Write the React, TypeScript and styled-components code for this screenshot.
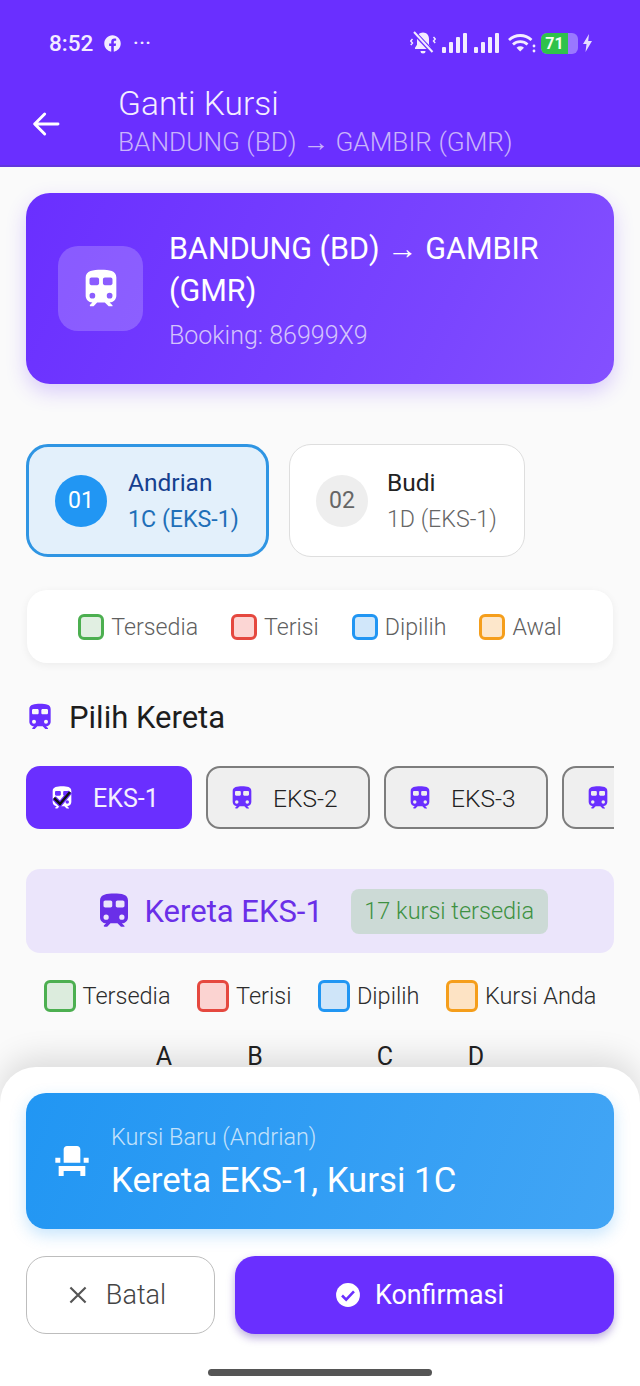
import React from "react"
import styled, { createGlobalStyle } from "styled-components"
import { FaFacebook } from "react-icons/fa"

const GlobalStyle = createGlobalStyle`
  html, body {
    margin: 0;
    padding: 0;
    background: #fafafa;
    font-family: Roboto, "Liberation Sans", sans-serif;
  }
  * { box-sizing: border-box; }
`

const PURPLE = "#6a2fff"

const Screen = styled.div`
  position: relative;
  width: 640px;
  height: 1386px;
  overflow: hidden;
  background: #fafafa;
`

const Header = styled.header`
  height: 167px;
  background: ${PURPLE};
  border-bottom: 2px solid #6136dc;
  color: #fff;
`

const StatusBar = styled.div`
  height: 86px;
  padding: 0 48px 0 49px;
  display: flex;
  align-items: center;
  justify-content: space-between;
`

const StatusGroup = styled.div`
  display: flex;
  align-items: center;
  color: #f3ecff;
`

const Time = styled.span`
  font-size: 22.5px;
  font-weight: 500;
  margin-right: 11px;
`

const Dots = styled.span`
  margin-left: 12px;
  font-size: 17px;
  font-weight: 700;
  letter-spacing: 1px;
`

const Battery = styled.div`
  width: 37px;
  height: 21px;
  margin: 0 5px 0 5px;
  border-radius: 6px;
  background: #9a78ff;
  overflow: hidden;
`

const BatteryFill = styled.div`
  width: 27px;
  height: 100%;
  background: #2fc24a;
  border-radius: 5px 0 0 5px;
  color: #f2fff2;
  font-size: 16px;
  font-weight: 700;
  line-height: 21px;
  text-align: center;
`

const Toolbar = styled.div`
  display: flex;
  align-items: center;
  padding-left: 30px;
`

const BackSlot = styled.div`
  width: 88px;
  display: flex;
  align-items: center;
`

const ToolbarTitle = styled.div`
  font-size: 33.5px;
  font-weight: 300;
  line-height: 38px;
  margin-top: -1px;
  color: #f4eeff;
`

const ToolbarSub = styled.div`
  font-size: 26.2px;
  font-weight: 300;
  line-height: 38px;
  color: #c9b4fb;
  white-space: nowrap;
`

const Content = styled.main`
  padding: 26px 26px 0;
  display: flex;
  flex-direction: column;
`

const RouteCard = styled.section`
  height: 191px;
  border-radius: 24px;
  padding: 0 32px;
  display: flex;
  align-items: center;
  gap: 26px;
  background: linear-gradient(115deg, #6a2fff 0%, #7a45ff 70%, #8450ff 100%);
  box-shadow: 0 8px 20px rgba(106, 47, 255, 0.22);
`

const RouteIconBox = styled.div`
  width: 85px;
  height: 85px;
  flex: none;
  border-radius: 20px;
  background: rgba(255, 255, 255, 0.2);
  display: flex;
  align-items: center;
  justify-content: center;
  color: #fff;
`

const RouteTitle = styled.div`
  font-size: 30.5px;
  line-height: 42px;
  color: #fff;
`

const RouteBooking = styled.div`
  font-size: 25px;
  font-weight: 300;
  line-height: 28px;
  margin-top: 10px;
  color: #d4c4fc;
`

const PassengerRow = styled.div`
  margin-top: 60px;
  display: flex;
  gap: 20px;
`

const PassengerCard = styled.div<{ $active?: boolean }>`
  height: 113px;
  width: ${(p) => (p.$active ? "243px" : "236px")};
  padding-left: 26px;
  display: flex;
  align-items: center;
  gap: ${(p) => (p.$active ? "21px" : "19px")};
  border-radius: 22px;
  border: ${(p) => (p.$active ? "3px solid #2f95e3" : "1.5px solid #dedede")};
  background: ${(p) => (p.$active ? "#e3f0fb" : "#fff")};
`

const PassengerNum = styled.div<{ $active?: boolean }>`
  width: 52px;
  height: 52px;
  flex: none;
  border-radius: 50%;
  display: flex;
  align-items: center;
  justify-content: center;
  font-size: 23px;
  background: ${(p) => (p.$active ? "#2196f3" : "#eeeeee")};
  color: ${(p) => (p.$active ? "#fff" : "#666")};
`

const PassengerName = styled.div<{ $active?: boolean }>`
  font-size: 24.5px;
  line-height: 36px;
  color: ${(p) => (p.$active ? "#15408f" : "#222")};
`

const PassengerSeat = styled.div<{ $active?: boolean }>`
  font-size: 23.2px;
  line-height: 36px;
  font-weight: ${(p) => (p.$active ? 400 : 300)};
  color: ${(p) => (p.$active ? "#1f6fb8" : "#666")};
`

const LegendCard = styled.div`
  margin: 33px 1px 0;
  height: 73px;
  border-radius: 20px;
  background: #fff;
  box-shadow: 0 2px 8px rgba(0, 0, 0, 0.06);
  display: flex;
  align-items: center;
  justify-content: center;
  gap: 33px;
`

const LegendItem = styled.div`
  display: flex;
  align-items: center;
  gap: 7px;
`

const Swatch = styled.span<{ $border: string; $fill: string; $size: number }>`
  width: ${(p) => p.$size}px;
  height: ${(p) => p.$size}px;
  border-radius: 6px;
  border: 3px solid ${(p) => p.$border};
  background: ${(p) => p.$fill};
`

const LegendLabel = styled.span<{ $dark?: boolean }>`
  font-size: ${(p) => (p.$dark ? "23.5px" : "23.2px")};
  font-weight: 300;
  color: ${(p) => (p.$dark ? "#2c2c2c" : "#5f5f5f")};
  white-space: nowrap;
`

const SectionTitle = styled.div`
  margin-top: 36px;
  margin-left: -2px;
  height: 36px;
  display: flex;
  align-items: center;
  gap: 13px;
  font-size: 31px;
  color: #1d1d1d;
  svg { color: ${PURPLE}; }
`

const ChipRow = styled.div`
  margin-top: 31px;
  display: flex;
  gap: 14px;
  overflow: hidden;
`

const Chip = styled.div<{ $active?: boolean }>`
  width: ${(p) => (p.$active ? "166px" : "164px")};
  height: 63px;
  flex: none;
  padding: 1px 0 0 ${(p) => (p.$active ? "22px" : "20px")};
  display: flex;
  align-items: center;
  gap: 17px;
  border-radius: 14px;
  font-size: ${(p) => (p.$active ? "25px" : "24.5px")};
  font-weight: ${(p) => (p.$active ? 400 : 300)};
  border: ${(p) => (p.$active ? "none" : "2px solid #7d7d7d")};
  background: ${(p) => (p.$active ? PURPLE : "#efefef")};
  color: ${(p) => (p.$active ? "#f4efff" : "#222")};
  svg { color: ${(p) => (p.$active ? "#fff" : PURPLE)}; }
`

const CheckedIcon = styled.span`
  position: relative;
  display: flex;
`

const CheckOverlay = styled.svg`
  position: absolute;
  left: 3px;
  top: 5px;
`

const TrainBanner = styled.div`
  margin-top: 40px;
  height: 84px;
  border-radius: 14px;
  background: #ebe5fb;
  display: flex;
  align-items: center;
  justify-content: center;
  color: #6a2fe8;
  svg { margin-right: 10px; }
`

const BannerText = styled.span`
  font-size: 31px;
  margin-right: 28px;
`

const AvailablePill = styled.span`
  height: 45px;
  padding: 0 13.5px;
  border-radius: 8px;
  display: flex;
  align-items: center;
  background: #ccdad6;
  color: #3e9142;
  font-size: 23.5px;
  font-weight: 300;
`

const SeatLegend = styled.div`
  margin-top: 27px;
  display: flex;
  justify-content: center;
  gap: 26.5px;
`

const SeatHeader = styled.div`
  margin-top: 31px;
  display: grid;
  grid-template-columns: 91px 91px 39px 91px 91px;
  justify-content: center;
  font-size: 25px;
  line-height: 28px;
  text-align: center;
  color: #222;
`

const Sheet = styled.div`
  position: absolute;
  left: 0;
  right: 0;
  bottom: 0;
  height: 319px;
  padding: 26px 26px 0;
  border-radius: 36px 36px 0 0;
  background: #fff;
  box-shadow: 0 -10px 30px rgba(0, 0, 0, 0.12);
`

const NewSeatCard = styled.div`
  height: 136px;
  border-radius: 20px;
  padding-left: 26px;
  display: flex;
  align-items: center;
  gap: 19px;
  color: #fff;
  background: linear-gradient(110deg, #2196f3, #42a5f5);
  box-shadow: 0 6px 16px rgba(33, 150, 243, 0.25);
`

const NewSeatLabel = styled.div`
  font-size: 23.4px;
  font-weight: 300;
  line-height: 26px;
  margin-top: 2px;
  color: #c4e2fb;
`

const NewSeatValue = styled.div`
  font-size: 34.8px;
  line-height: 40px;
  margin-top: 10px;
`

const ActionRow = styled.div`
  margin-top: 27px;
  display: flex;
  gap: 20px;
`

const ActionButton = styled.button<{ $primary?: boolean }>`
  height: 78px;
  width: ${(p) => (p.$primary ? "379px" : "189px")};
  padding: 0 10px 0 0;
  border-radius: 20px;
  display: flex;
  align-items: center;
  justify-content: center;
  gap: ${(p) => (p.$primary ? "14px" : "15px")};
  font-family: inherit;
  font-size: ${(p) => (p.$primary ? "26.8px" : "27px")};
  font-weight: ${(p) => (p.$primary ? 400 : 300)};
  border: ${(p) => (p.$primary ? "none" : "1.5px solid #bdbdbd")};
  color: ${(p) => (p.$primary ? "#fff" : "#444")};
  background: ${(p) => (p.$primary ? PURPLE : "#fff")};
  box-shadow: ${(p) => (p.$primary ? "0 4px 8px rgba(60, 20, 160, 0.35)" : "none")};
`

const HomeBar = styled.div`
  position: absolute;
  left: 208px;
  bottom: 10px;
  width: 224px;
  height: 7px;
  border-radius: 4px;
  background: #555;
`

const TrainIcon = ({ size }: { size: number }) => (
  <svg width={size} height={size} viewBox="0 0 24 24" fill="currentColor">
    <path
      fillRule="evenodd"
      d="M12 2C8 2 4 2.5 4 6v9.5C4 17.43 5.57 19 7.5 19l-1.2 1.2c-.3.3-.1.8.3.8h1.3c.13 0 .26-.05.35-.15L10 19h4l2 2h2v-.5L16.5 19c1.93 0 3.5-1.57 3.5-3.5V6c0-3.5-3.58-4-8-4zM7 6h3c.55 0 1 .45 1 1v2c0 .55-.45 1-1 1H7c-.55 0-1-.45-1-1V7c0-.55.45-1 1-1zm7 0h3c.55 0 1 .45 1 1v2c0 .55-.45 1-1 1h-3c-.55 0-1-.45-1-1V7c0-.55.45-1 1-1zM7.5 14a1.5 1.5 0 1 1 0 3 1.5 1.5 0 0 1 0-3zm9 0a1.5 1.5 0 1 1 0 3 1.5 1.5 0 0 1 0-3z"
    />
  </svg>
)

const SeatIcon = () => (
  <svg width="40" height="40" viewBox="0 0 24 24" fill="#fff">
    <path d="M4 18v3h3v-3h10v3h3v-6H4zm15-8h3v3h-3zM2 10h3v3H2zm15 3H7V5c0-1.1.9-2 2-2h6c1.1 0 2 .9 2 2v8z" />
  </svg>
)

const BackArrow = () => (
  <svg width="32" height="32" viewBox="0 0 24 24" fill="none" stroke="#fff" strokeWidth="2.2" strokeLinecap="round" strokeLinejoin="round">
    <path d="M21 12H3.500M11 4.500 3.500 12l7.500 7.500" />
  </svg>
)

const SignalBars = () => (
  <svg width="26" height="20" viewBox="0 0 26 20" fill="#f3ecff" style={{ marginLeft: 6 }}>
    <rect x="0" y="14" width="4" height="6" rx="1" />
    <rect x="7" y="9" width="4" height="11" rx="1" />
    <rect x="14" y="4" width="4" height="16" rx="1" />
    <rect x="21" y="0" width="4" height="20" rx="1" />
  </svg>
)

const WifiIcon = () => (
  <svg width="28" height="20" viewBox="0 0 28 20" fill="none" stroke="#f3ecff" strokeWidth="2.8" style={{ marginLeft: 8 }}>
    <path d="M1 7c6.500-6 16-6 22.500 0M5 11.500c4.200-3.800 10.300-3.800 14.500 0" />
    <path d="M12.200 18.500l-3.700-3.800c2.200-1.800 5.300-1.800 7.500 0z" fill="#f3ecff" stroke="none" />
    <circle cx="26" cy="13" r="1.400" fill="#f3ecff" stroke="none" />
    <circle cx="26" cy="18" r="1.400" fill="#f3ecff" stroke="none" />
  </svg>
)

const MutedBell = () => (
  <svg width="26" height="24" viewBox="0 0 26 24" fill="#f3ecff">
    <path d="M13 1.500c-3.600 0-6 2.800-6 6.200v6l-2 3v1.300h16v-1.300l-2-3v-6c0-3.400-2.400-6.200-6-6.200z" />
    <path d="M10.500 20h5a2.500 2.500 0 0 1-5 0z" />
    <path d="M4 1.500 22.500 21" stroke={PURPLE} strokeWidth="4.500" />
    <path d="M4 1 22.500 21" stroke="#f3ecff" strokeWidth="2" />
    <path d="M2.500 8 .8 10l1.700 2-1.700 2M23.500 6l1.700 2-1.700 2 1.700 2" fill="none" stroke="#f3ecff" strokeWidth="1.400" />
  </svg>
)

const Bolt = () => (
  <svg width="9" height="18" viewBox="0 0 9 18" fill="#e6dcff">
    <path d="M6 0 0 10h3.500L2.500 18 9 7H5.200z" />
  </svg>
)

const legendTop = [
  { label: "Tersedia", border: "#4caf50", fill: "#e1efe2" },
  { label: "Terisi", border: "#e5483f", fill: "#fcd6d4" },
  { label: "Dipilih", border: "#2196f3", fill: "#d1e7fa" },
  { label: "Awal", border: "#f59e1b", fill: "#fde7cb" },
]

const legendSeats = [
  { label: "Tersedia", border: "#4caf50", fill: "#dcecdd" },
  { label: "Terisi", border: "#e5483f", fill: "#fbd3d1" },
  { label: "Dipilih", border: "#2196f3", fill: "#cfe5f9" },
  { label: "Kursi Anda", border: "#f59e1b", fill: "#fde3c4" },
]

function App() {
  return (
    <Screen>
      <GlobalStyle />
      <Header>
        <StatusBar>
          <StatusGroup>
            <Time>8:52</Time>
            <FaFacebook size={17} />
            <Dots>···</Dots>
          </StatusGroup>
          <StatusGroup>
            <MutedBell />
            <SignalBars />
            <SignalBars />
            <WifiIcon />
            <Battery>
              <BatteryFill>71</BatteryFill>
            </Battery>
            <Bolt />
          </StatusGroup>
        </StatusBar>
        <Toolbar>
          <BackSlot>
            <BackArrow />
          </BackSlot>
          <div>
            <ToolbarTitle>Ganti Kursi</ToolbarTitle>
            <ToolbarSub>BANDUNG (BD) → GAMBIR (GMR)</ToolbarSub>
          </div>
        </Toolbar>
      </Header>

      <Content>
        <RouteCard>
          <RouteIconBox>
            <TrainIcon size={46} />
          </RouteIconBox>
          <div>
            <RouteTitle>BANDUNG (BD) → GAMBIR (GMR)</RouteTitle>
            <RouteBooking>Booking: 86999X9</RouteBooking>
          </div>
        </RouteCard>

        <PassengerRow>
          <PassengerCard $active>
            <PassengerNum $active>01</PassengerNum>
            <div>
              <PassengerName $active>Andrian</PassengerName>
              <PassengerSeat $active>1C (EKS-1)</PassengerSeat>
            </div>
          </PassengerCard>
          <PassengerCard>
            <PassengerNum>02</PassengerNum>
            <div>
              <PassengerName>Budi</PassengerName>
              <PassengerSeat>1D (EKS-1)</PassengerSeat>
            </div>
          </PassengerCard>
        </PassengerRow>

        <LegendCard>
          {legendTop.map((l) => (
            <LegendItem key={l.label}>
              <Swatch $border={l.border} $fill={l.fill} $size={26} />
              <LegendLabel>{l.label}</LegendLabel>
            </LegendItem>
          ))}
        </LegendCard>

        <SectionTitle>
          <TrainIcon size={32} />
          Pilih Kereta
        </SectionTitle>

        <ChipRow>
          <Chip $active>
            <CheckedIcon>
              <TrainIcon size={28} />
              <CheckOverlay width="22" height="20" viewBox="0 0 22 20" fill="none">
                <path d="M3 9l6 6L19 3" stroke={PURPLE} strokeWidth="5" />
                <path d="M3 9l6 6L19 3" stroke="#111" strokeWidth="2.500" />
              </CheckOverlay>
            </CheckedIcon>
            EKS-1
          </Chip>
          <Chip>
            <TrainIcon size={28} />
            EKS-2
          </Chip>
          <Chip>
            <TrainIcon size={28} />
            EKS-3
          </Chip>
          <Chip>
            <TrainIcon size={28} />
          </Chip>
        </ChipRow>

        <TrainBanner>
          <TrainIcon size={42} />
          <BannerText>Kereta EKS-1</BannerText>
          <AvailablePill>17 kursi tersedia</AvailablePill>
        </TrainBanner>

        <SeatLegend>
          {legendSeats.map((l) => (
            <LegendItem key={l.label}>
              <Swatch $border={l.border} $fill={l.fill} $size={32} />
              <LegendLabel $dark>{l.label}</LegendLabel>
            </LegendItem>
          ))}
        </SeatLegend>

        <SeatHeader>
          <span>A</span>
          <span>B</span>
          <span />
          <span>C</span>
          <span>D</span>
        </SeatHeader>
      </Content>

      <Sheet>
        <NewSeatCard>
          <SeatIcon />
          <div>
            <NewSeatLabel>Kursi Baru (Andrian)</NewSeatLabel>
            <NewSeatValue>Kereta EKS-1, Kursi 1C</NewSeatValue>
          </div>
        </NewSeatCard>
        <ActionRow>
          <ActionButton>
            <svg width="26" height="26" viewBox="0 0 24 24" fill="none" stroke="#555" strokeWidth="2">
              <path d="M5 5l14 14M19 5 5 19" />
            </svg>
            Batal
          </ActionButton>
          <ActionButton $primary>
            <svg width="26" height="26" viewBox="0 0 24 24">
              <circle cx="12" cy="12" r="11" fill="#fff" />
              <path d="M6.500 12.500l3.800 3.800 7.200-7.600" fill="none" stroke={PURPLE} strokeWidth="2.400" />
            </svg>
            Konfirmasi
          </ActionButton>
        </ActionRow>
        <HomeBar />
      </Sheet>
    </Screen>
  )
}

export default App
